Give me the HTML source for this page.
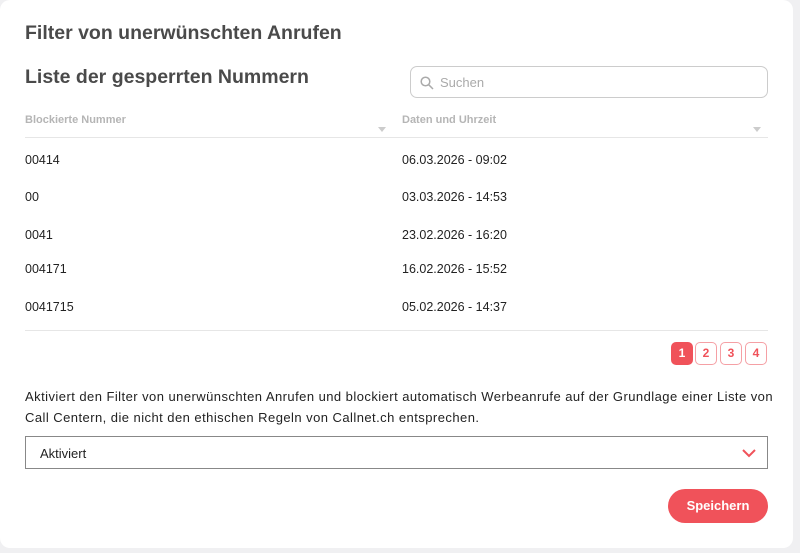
<!DOCTYPE html>
<html><head><meta charset="utf-8"><style>
*{margin:0;padding:0;box-sizing:border-box}
body{width:800px;height:553px;background:#f0f0f2;font-family:"Liberation Sans",sans-serif;color:#333;position:relative;overflow:hidden}
.card{position:absolute;left:0;top:0;width:793px;height:548px;background:#fff;border-radius:10px}
.a{position:absolute;white-space:nowrap}
.h1{left:25px;top:22px;font-size:19.5px;font-weight:bold;color:#4a4a4a}
.h2{left:25px;top:66px;font-size:19.5px;font-weight:bold;color:#4a4a4a}
.search{left:410px;top:66px;width:358px;height:32px;border:1.5px solid #ccc;border-radius:7px;font-size:13px;color:#aaa;padding:8px 0 0 29px}
.th{top:114px;font-size:11px;font-weight:bold;color:#b5b5b5}
.line{height:1px;background:#e6e6e6;left:25px;width:743px}
.td{font-size:12.5px;color:#222}
.pg{top:342px;width:22px;height:23px;border:1px solid #f5a0a5;border-radius:5px;color:#f0525a;font-size:12px;font-weight:bold;text-align:center;line-height:21px}
.tri{width:0;height:0;border-left:4px solid transparent;border-right:4px solid transparent;border-top:5px solid #ccc}
</style></head><body>
<div class="card"></div>
<div class="a h1">Filter von unerwünschten Anrufen</div>
<div class="a h2">Liste der gesperrten Nummern</div>
<div class="a search">Suchen<svg style="position:absolute;left:9px;top:9px" width="14" height="14" viewBox="0 0 14 14"><circle cx="5.5" cy="5.5" r="4.3" fill="none" stroke="#aaa" stroke-width="1.5"/><line x1="8.8" y1="8.8" x2="13" y2="13" stroke="#aaa" stroke-width="1.5"/></svg></div>
<div class="a th" style="left:25px">Blockierte Nummer</div>
<div class="a th" style="left:402px">Daten und Uhrzeit</div>
<div class="a tri" style="left:378px;top:127px"></div>
<div class="a tri" style="left:753px;top:127px"></div>
<div class="a line" style="top:137px"></div>
<div class="a td" style="left:25px;top:153px">00414</div><div class="a td" style="left:402px;top:153px">06.03.2026 - 09:02</div>
<div class="a td" style="left:25px;top:190px">00</div><div class="a td" style="left:402px;top:190px">03.03.2026 - 14:53</div>
<div class="a td" style="left:25px;top:228px">0041</div><div class="a td" style="left:402px;top:228px">23.02.2026 - 16:20</div>
<div class="a td" style="left:25px;top:262px">004171</div><div class="a td" style="left:402px;top:262px">16.02.2026 - 15:52</div>
<div class="a td" style="left:25px;top:300px">0041715</div><div class="a td" style="left:402px;top:300px">05.02.2026 - 14:37</div>
<div class="a line" style="top:330px"></div>
<div class="a pg" style="left:671px;background:#f0525a;border-color:#f0525a;color:#fff">1</div>
<div class="a pg" style="left:695px">2</div>
<div class="a pg" style="left:720px">3</div>
<div class="a pg" style="left:745px">4</div>
<div class="a td" style="left:25px;top:386px;line-height:21px;font-size:13px;letter-spacing:0.45px">Aktiviert den Filter von unerwünschten Anrufen und blockiert automatisch Werbeanrufe auf der Grundlage einer Liste von<br>Call Centern, die nicht den ethischen Regeln von Callnet.ch entsprechen.</div>
<div class="a" style="left:25px;top:436px;width:743px;height:33px;border:1px solid #888;font-size:13px;padding:9px 0 0 14px;color:#222">Aktiviert<svg style="position:absolute;right:10px;top:11px" width="16" height="10" viewBox="0 0 16 10"><path d="M2 2l6 6 6-6" fill="none" stroke="#f0525a" stroke-width="2"/></svg></div>
<div class="a" style="left:668px;top:489px;width:100px;height:34px;border-radius:17px;background:#f0525a;color:#fff;font-size:13px;font-weight:bold;text-align:center;line-height:34px">Speichern</div>
</body></html>
